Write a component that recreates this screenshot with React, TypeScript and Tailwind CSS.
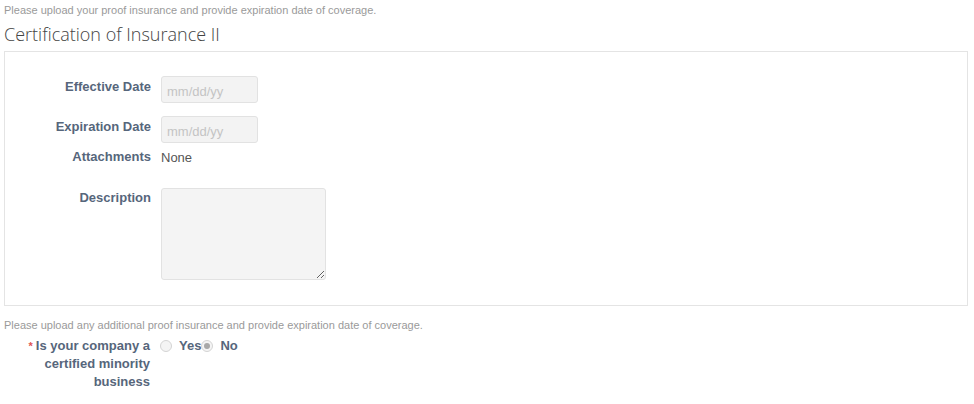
import React from 'react';

const labelCls =
  "w-[146px] shrink-0 text-right text-[13px] leading-[18px] font-bold text-[#56667b]";

const DateInput: React.FC = () => (
  <input
    type="text"
    disabled
    placeholder="mm/dd/yy"
    className="w-[97px] h-[27px] rounded-[3px] border border-[#e2e2e2] bg-[#f3f3f3] px-[5px] pt-[3px] text-[13px] placeholder:text-[#c4c4c4] outline-none"
  />
);

const Radio: React.FC<{ checked?: boolean }> = ({ checked }) => (
  <span className="inline-flex h-[12px] w-[12px] items-center justify-center rounded-full border border-[#d4d4d4] bg-[#f4f4f4]">
    {checked && <span className="h-[6px] w-[6px] rounded-full bg-[#a8a8a8]" />}
  </span>
);

const App: React.FC = () => {
  return (
    <div className="min-h-[404px] bg-white px-[4px] pr-[6px] pt-[3px] font-['Liberation_Sans',Arial,sans-serif]">
      <p className="text-[11px] leading-[14px] text-[#9a9a9a]">
        Please upload your proof insurance and provide expiration date of coverage.
      </p>
      <h2 className="mt-[4px] font-['Open_Sans',sans-serif] text-[18px] leading-[26px] font-light text-[#444]">
        Certification of Insurance II
      </h2>

      <div className="mt-[4px] border border-[#e4e4e4] pt-[24px] pb-[25px]">
        <div className="flex items-start gap-[10px]">
          <label className={`${labelCls} pt-[2px]`}>Effective Date</label>
          <DateInput />
        </div>
        <div className="mt-[13px] flex items-start gap-[10px]">
          <label className={`${labelCls} pt-[2px]`}>Expiration Date</label>
          <DateInput />
        </div>
        <div className="mt-[5px] flex items-start gap-[10px]">
          <label className={labelCls}>Attachments</label>
          <span className="pt-[1px] text-[13px] leading-[18px] text-[#555]">None</span>
        </div>
        <div className="mt-[21px] flex items-start gap-[10px]">
          <label className={`${labelCls} pt-[1px]`}>Description</label>
          <textarea
            disabled
            className="h-[92px] w-[165px] resize rounded-[3px] border border-[#e2e2e2] bg-[#f4f4f4] outline-none"
          />
        </div>
      </div>

      <p className="mt-[12px] text-[11px] leading-[14px] text-[#9a9a9a]">
        Please upload any additional proof insurance and provide expiration date of coverage.
      </p>

      <div className="mt-[5px] flex items-start gap-[10px]">
        <label className={labelCls}>
          <span className="mr-[3px] align-top text-[11px] text-[#e05555]">*</span>
          Is your company a certified minority business
        </label>
        <div className="flex items-center text-[13px] leading-[18px] font-bold text-[#56667b]">
          <Radio />
          <span className="ml-[7px]">Yes</span>
          <Radio checked />
          <span className="ml-[7px]">No</span>
        </div>
      </div>
    </div>
  );
};

export default App;
